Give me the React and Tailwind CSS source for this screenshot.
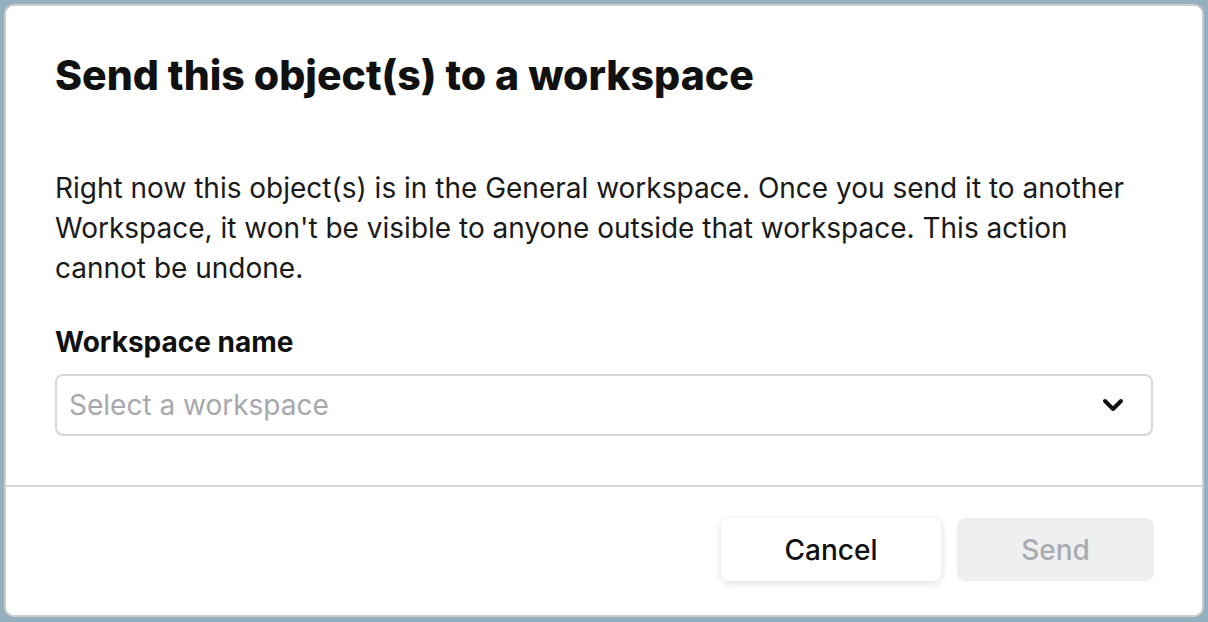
import React from "react";
import { ChevronDown } from "lucide-react";

const SendToWorkspace = () => {
  return (
    <div className="w-[1208px] h-[622px] bg-[#94b0be] pt-[4px] pl-[4px] pr-[4px] pb-[5px] flex">
      <div
        className="flex-1 flex flex-col bg-white rounded-[10px] border-2 border-[#cdcdcd] overflow-hidden"
        style={{ fontFamily: "Inter, 'Noto Sans', sans-serif" }}
      >
        <div className="px-[49px] pt-[45px] pb-[49px] flex flex-col">
          <h2 className="text-[41px] leading-[48px] font-extrabold text-[#111]">
            Send this object(s) to a workspace
          </h2>

          <p className="mt-[69px] text-[28px] leading-[40px] text-[#1a1a1a]">
            Right now this object(s) is in the General workspace. Once you send it to another
            Workspace, it won't be visible to anyone outside that workspace. This action
            cannot be undone.
          </p>

          <label className="mt-[38px] text-[28px] leading-[32px] font-bold text-[#111]">
            Workspace name
          </label>

          <button className="mt-[16px] h-[62px] w-full flex items-center justify-between pl-[12px] pr-[22px] border-2 border-[#d6d6d6] rounded-[8px] text-left">
            <span className="text-[28px] text-[#a7a7ae]">Select a workspace</span>
            <ChevronDown size={32} strokeWidth={3} className="text-[#111]" />
          </button>
        </div>

        <div className="border-t-2 border-[#d6d6d6] flex justify-end gap-[16px] pt-[31px] pr-[48px]">
          <button className="w-[220px] h-[63px] bg-white rounded-[8px] shadow-[0_2px_8px_rgba(0,0,0,0.14)] text-[28px] font-medium text-[#111]">
            Cancel
          </button>
          <button
            disabled
            className="w-[197px] h-[63px] bg-[#efefef] rounded-[8px] text-[28px] font-medium text-[#a9a9b0]"
          >
            Send
          </button>
        </div>
      </div>
    </div>
  );
};

export default function App() {
  return <SendToWorkspace />;
}
